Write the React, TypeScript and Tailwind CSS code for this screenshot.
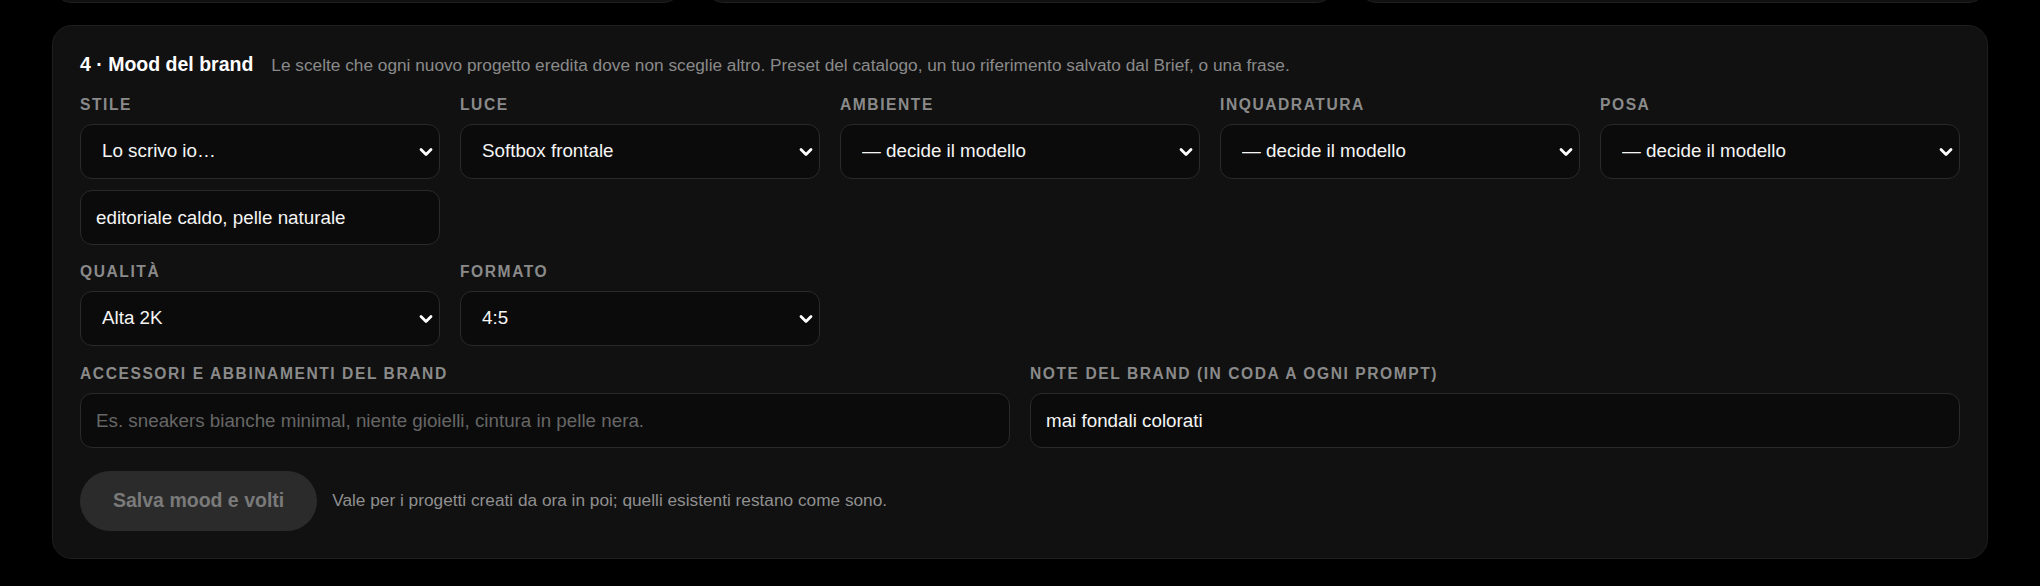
import React from "react";

const font = { fontFamily: '"Liberation Sans", Arial, Helvetica, sans-serif' };

function Chevron() {
  return (
    <svg
      className="pointer-events-none absolute right-[7px] top-1/2 -translate-y-1/2"
      width="14"
      height="10"
      viewBox="0 0 14 10"
      fill="none"
    >
      <path d="M2 2.5 L7 7.5 L12 2.5" stroke="#ffffff" strokeWidth="2.8" strokeLinecap="round" strokeLinejoin="round" />
    </svg>
  );
}

function Label({ children }: { children: React.ReactNode }) {
  return (
    <div className="mb-[11px] text-[15.6px] leading-[17px] font-bold tracking-[0.1em] text-[#8a8a8a] uppercase">
      {children}
    </div>
  );
}

function Select({ value, options }: { value: string; options: string[] }) {
  return (
    <div className="relative">
      <select
        defaultValue={value}
        className="h-[55px] w-full appearance-none rounded-[12px] border border-[#2a2a2a] bg-[#0b0b0b] pl-[21px] pr-[28px] text-[18.8px] text-[#f5f5f5] outline-none"
        style={font}
      >
        {options.map((o) => (
          <option key={o} value={o}>
            {o}
          </option>
        ))}
      </select>
      <Chevron />
    </div>
  );
}

function TextInput({ value, placeholder }: { value?: string; placeholder?: string }) {
  return (
    <input
      type="text"
      defaultValue={value}
      placeholder={placeholder}
      className="h-[55px] w-full rounded-[12px] border border-[#2a2a2a] bg-[#0b0b0b] px-[15px] text-[18.8px] text-[#f5f5f5] outline-none placeholder:text-[#666666]"
      style={font}
    />
  );
}

export default function App() {
  const modello = ["— decide il modello"];
  return (
    <div className="min-h-[586px] w-full bg-black px-[52px]" style={font}>
      <div className="flex h-[3px] items-end overflow-hidden">
        <div className="grid w-full grid-cols-3 gap-[21px]">
          <div className="h-[60px] rounded-[20px] border border-[#1f1f1f] bg-[#111111]" />
          <div className="h-[60px] rounded-[20px] border border-[#1f1f1f] bg-[#111111]" />
          <div className="h-[60px] rounded-[20px] border border-[#1f1f1f] bg-[#111111]" />
        </div>
      </div>

      <section className="mt-[22px] rounded-[20px] border border-[#1f1f1f] bg-[#111111] px-[27px] pt-[27px] pb-[27px]">
        <div className="flex h-[22px] items-baseline gap-[18px]">
          <h2 className="text-[19.5px] leading-[22px] font-bold text-white">4 · Mood del brand</h2>
          <p className="text-[17.25px] leading-[22px] text-[#8a8a8a]">
            Le scelte che ogni nuovo progetto eredita dove non sceglie altro. Preset del catalogo, un tuo riferimento salvato dal Brief, o una frase.
          </p>
        </div>

        <div className="mt-[21px] grid grid-cols-5 gap-x-[20px]">
          <div>
            <Label>Stile</Label>
            <Select value="Lo scrivo io…" options={["Lo scrivo io…"]} />
            <div className="mt-[11px]">
              <TextInput value="editoriale caldo, pelle naturale" />
            </div>
          </div>
          <div>
            <Label>Luce</Label>
            <Select value="Softbox frontale" options={["Softbox frontale"]} />
          </div>
          <div>
            <Label>Ambiente</Label>
            <Select value="— decide il modello" options={modello} />
          </div>
          <div>
            <Label>Inquadratura</Label>
            <Select value="— decide il modello" options={modello} />
          </div>
          <div>
            <Label>Posa</Label>
            <Select value="— decide il modello" options={modello} />
          </div>
        </div>

        <div className="mt-[18px] grid grid-cols-5 gap-x-[20px]">
          <div>
            <Label>Qualità</Label>
            <Select value="Alta 2K" options={["Alta 2K"]} />
          </div>
          <div>
            <Label>Formato</Label>
            <Select value="4:5" options={["4:5"]} />
          </div>
        </div>

        <div className="mt-[19px] grid grid-cols-2 gap-x-[20px]">
          <div>
            <Label>Accessori e abbinamenti del brand</Label>
            <TextInput placeholder="Es. sneakers bianche minimal, niente gioielli, cintura in pelle nera." />
          </div>
          <div>
            <Label>Note del brand (in coda a ogni prompt)</Label>
            <TextInput value="mai fondali colorati" />
          </div>
        </div>

        <div className="mt-[23px] flex items-center gap-[15px]">
          <button
            type="button"
            disabled
            className="h-[60px] rounded-full bg-[#2b2b2b] px-[33px] text-[19.5px] font-bold text-[#7a7a7a]"
            style={font}
          >
            Salva mood e volti
          </button>
          <span className="text-[17.25px] text-[#8f8f8f]">
            Vale per i progetti creati da ora in poi; quelli esistenti restano come sono.
          </span>
        </div>
      </section>
    </div>
  );
}
